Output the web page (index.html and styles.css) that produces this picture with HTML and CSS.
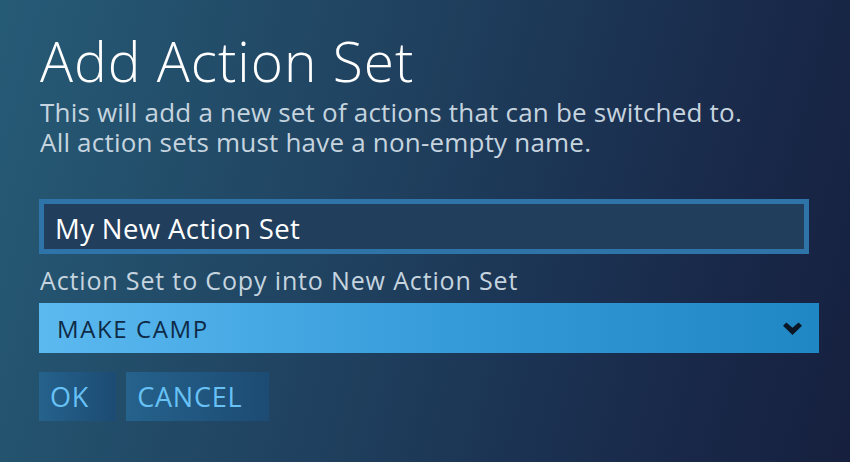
FILE: index.html
```html
<!DOCTYPE html>
<html>
<head>
<meta charset="utf-8">
<link rel="stylesheet" href="styles.css">
</head>
<body>
<div class="dialog">
  <h1 class="title">Add Action Set</h1>
  <div class="desc">
    <div class="desc-line">This will add a new set of actions that can be switched to.</div>
    <div class="desc-line">All action sets must have a non-empty name.</div>
  </div>
  <div class="input"><span class="input-text">My New Action Set</span></div>
  <div class="label">Action Set to Copy into New Action Set</div>
  <div class="select">
    <span class="select-text">MAKE CAMP</span>
    <svg class="chev" width="19" height="13" viewBox="0 0 19 13"><path d="M0 3.8 L3.4 0.4 L9.5 5.8 L15.6 0.4 L19 3.8 L9.5 13 Z" fill="#0b1726"/></svg>
  </div>
  <div class="buttons">
    <div class="btn">OK</div>
    <div class="btn">CANCEL</div>
  </div>
</div>
</body>
</html>
```
FILE: styles.css
```css
html, body {
  margin: 0;
  padding: 0;
  width: 850px;
  height: 462px;
  overflow: hidden;
}
body {
  background: linear-gradient(105deg, #265b76 0%, #1f405e 45%, #19294a 80%, #16203e 100%);
  font-family: "Open Sans", sans-serif;
}
.dialog {
  padding: 31px 0 0 39px;
}
.title {
  margin: 0;
  font-weight: 300;
  font-size: 55px;
  line-height: 60px;
  color: #ffffff;
  padding-left: 1px;
  letter-spacing: 1px;
}
.desc {
  margin: 6px 0 0 0;
  font-size: 26px;
  color: #c6d4df;
  padding-left: 1px;
  letter-spacing: 0.2px;
}
.desc-line {
  height: 30px;
  line-height: 30px;
  white-space: nowrap;
}
.input {
  box-sizing: border-box;
  margin-top: 42px;
  height: 55px;
  width: 770px;
  border: 5px solid #2e74a8;
  background: #213e5c;
  display: flex;
  align-items: center;
  padding: 3px 0 0 11px;
}
.input-text {
  color: #ffffff;
  font-size: 27.5px;
  letter-spacing: 0.4px;
}
.label {
  margin: 9px 0 6px 0;
  font-size: 25px;
  line-height: 34px;
  color: #c6d4df;
  padding-left: 1px;
  letter-spacing: 0.85px;
}
.select {
  height: 50px;
  width: 780px;
  background: linear-gradient(90deg, #5cb9f0 0%, #3a9fdc 45%, #1f87c3 100%);
  display: flex;
  align-items: center;
  justify-content: space-between;
  padding: 0 17px 0 18px;
  box-sizing: border-box;
}
.select-text {
  color: #0e2a46;
  font-size: 24px;
  letter-spacing: 1.6px;
}
.chev {
  display: block;
}
.buttons {
  display: flex;
  gap: 10px;
  margin-top: 19px;
}
.btn {
  height: 49px;
  display: flex;
  align-items: center;
  padding: 0 27px 0 11px;
  background: linear-gradient(90deg, #25628c 0%, #1c4b73 100%);
  color: #67c1f5;
  font-size: 27px;
  letter-spacing: 0.8px;
}
```
